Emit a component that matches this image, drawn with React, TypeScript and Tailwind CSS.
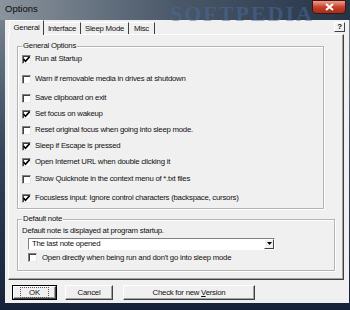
const font = { fontFamily: '"Liberation Sans", Arial, sans-serif' };

const options: [string, boolean, string][] = [
  ['Run at Startup', true, 'mt-[1px]'],
  ['Warn if removable media in drives at shutdown', false, 'mt-[10px]'],
  ['Save clipboard on exit', false, 'mt-[9px]'],
  ['Set focus on wakeup', true, 'mt-[6px]'],
  ['Reset original focus when going into sleep mode.', false, 'mt-[6px]'],
  ['Sleep if Escape is pressed', true, 'mt-[6px]'],
  ['Open Internet URL when double clicking it', true, 'mt-[6px]'],
  ['Show Quicknote in the context menu of *.txt files', false, 'mt-[7px]'],
  ['Focusless input: Ignore control characters (backspace, cursors)', true, 'mt-[9px]'],
];

function Check({ on }: { on: boolean }) {
  return (
    <span className="w-[9px] h-[9px] shrink-0 bg-white border border-t-[#808080] border-l-[#808080] border-r-[#e8e8e8] border-b-[#e8e8e8] shadow-[inset_1px_1px_0_#404040] flex items-center justify-center">
      {on && (
        <svg width="7" height="7" viewBox="0 0 7 7">
          <path d="M0.5 3 L2.5 5.2 L6.5 0.8" stroke="#000" strokeWidth="1.6" fill="none" />
        </svg>
      )}
    </span>
  );
}

function Row({ label, on, cls }: { label: string; on: boolean; cls: string }) {
  return (
    <div className={`flex items-center h-[10px] gap-[4px] ${cls}`}>
      <Check on={on} />
      <span className="whitespace-nowrap leading-none">{label}</span>
    </div>
  );
}

function Btn({ children, w, def }: { children: React.ReactNode; w: string; def?: boolean }) {
  return (
    <div className={`${w} h-[15px] ${def ? 'border border-black' : ''}`}>
      <div className="h-full bg-[#f0f0f0] border border-t-white border-l-white border-r-[#404040] border-b-[#404040] shadow-[inset_-1px_-1px_0_#a0a0a0] flex items-center justify-center">
        <span className={def ? 'px-[8px] border border-dotted border-[#555] leading-none py-[1px]' : 'leading-none'}>{children}</span>
      </div>
    </div>
  );
}

export default function App() {
  return (
    <div
      style={font}
      className="w-[350px] h-[310px] flex flex-col bg-gradient-to-b from-[#7f8a95] via-[#34445a] to-[#16223a] text-[7.8px] tracking-[-0.25px] text-[#111] overflow-hidden"
    >
      {/* title bar */}
      <div className="h-[20px] relative flex items-center px-[5px] bg-gradient-to-r from-[#8a949d] via-[#4a5869] to-[#263448]">
        <span className="text-[9.5px] tracking-normal text-[#0c0c0c] -mt-[2px]">Options</span>
        <span className="absolute left-[170px] top-[-3px] text-[22px] font-bold tracking-[2px] text-[#4a6c9c] opacity-50" style={{ fontFamily: '"Liberation Serif", serif' }}>
          SOFTPEDIA
        </span>
        <div className="absolute right-[4px] top-0 w-[34px] h-[14px] rounded-b-[4px] border border-[#4a1010] bg-gradient-to-b from-[#e8a090] via-[#c8402a] to-[#a0301c] flex items-center justify-center">
          <svg width="9" height="8" viewBox="0 0 9 8">
            <path d="M1 1 L8 7 M8 1 L1 7" stroke="#fff" strokeWidth="2" />
          </svg>
        </div>
      </div>

      <div className="flex-1 flex px-[5px] pb-[7px]">
        <div className="flex-1 bg-[#f0f0f0] flex flex-col">
          {/* tabs */}
          <div className="h-[14px] flex items-end pl-[4px] pr-[4px] relative">
            <div className="w-[35px] h-[15px] -mb-[1px] z-10 bg-[#f0f0f0] border border-b-0 border-t-white border-l-white border-r-[#404040] flex items-center justify-center">
              General
            </div>
            <div className="w-[37px] h-[12px] border-t border-t-white border-r border-r-[#404040] flex items-center justify-center">Interface</div>
            <div className="w-[48px] h-[12px] border-t border-t-white border-r border-r-[#404040] flex items-center justify-center">Sleep Mode</div>
            <div className="w-[26px] h-[12px] border-t border-t-white border-r border-r-[#404040] flex items-center justify-center">Misc</div>
            <div className="ml-auto mb-[2px] w-[11px] h-[10px] bg-[#f0f0f0] border border-t-white border-l-white border-r-[#404040] border-b-[#404040] flex items-center justify-center text-[8px] font-bold">
              ?
            </div>
          </div>

          {/* tab page */}
          <div className="ml-[3px] mr-[5px] h-[246px] border border-t-white border-l-white border-r-[#404040] border-b-[#404040] shadow-[inset_-1px_-1px_0_#a0a0a0] px-[8px] pt-[11px] flex flex-col">
            <div className="relative w-[307px] h-[163px] border border-[#b4b4b4] shadow-[1px_1px_0_#fff,inset_1px_1px_0_#fff] pl-[4px] pt-[6px]">
              <span className="absolute left-[4px] -top-[5px] bg-[#f0f0f0] px-[1px] leading-none">General Options</span>
              {options.map(([l, on, cls]) => (
                <Row key={l} label={l} on={on} cls={cls} />
              ))}
            </div>

            <div className="relative mt-[10px] w-[318px] h-[52px] border border-[#b4b4b4] shadow-[1px_1px_0_#fff,inset_1px_1px_0_#fff] pl-[4px] pt-[7px]">
              <span className="absolute left-[4px] -top-[5px] bg-[#f0f0f0] px-[1px] leading-none">Default note</span>
              <div className="leading-none">Default note is displayed at program startup.</div>
              <div className="mt-[3px] ml-[6px] w-[247px] h-[12px] bg-white border border-t-[#808080] border-l-[#808080] border-r-white border-b-white flex items-center">
                <span className="pl-[3px] flex-1 leading-none">The last note opened</span>
                <div className="w-[10px] h-[10px] bg-[#f0f0f0] border border-t-white border-l-white border-r-[#404040] border-b-[#404040] flex items-center justify-center">
                  <svg width="5" height="3" viewBox="0 0 5 3">
                    <path d="M0 0 H5 L2.5 3 Z" fill="#000" />
                  </svg>
                </div>
              </div>
              <div className="mt-[3px] ml-[6px]">
                <Row label="Open directly when being run and don't go into sleep mode" on={false} cls="gap-[5px]" />
              </div>
            </div>
          </div>

          {/* buttons */}
          <div className="mt-[5px] ml-[7px] flex gap-[8px]">
            <Btn w="w-[45px]" def>
              OK
            </Btn>
            <Btn w="w-[48px]">Cancel</Btn>
            <div className="ml-[2px]">
              <Btn w="w-[132px]">
                Check for new <span className="underline">V</span>ersion
              </Btn>
            </div>
          </div>
        </div>
      </div>
    </div>
  );
}
